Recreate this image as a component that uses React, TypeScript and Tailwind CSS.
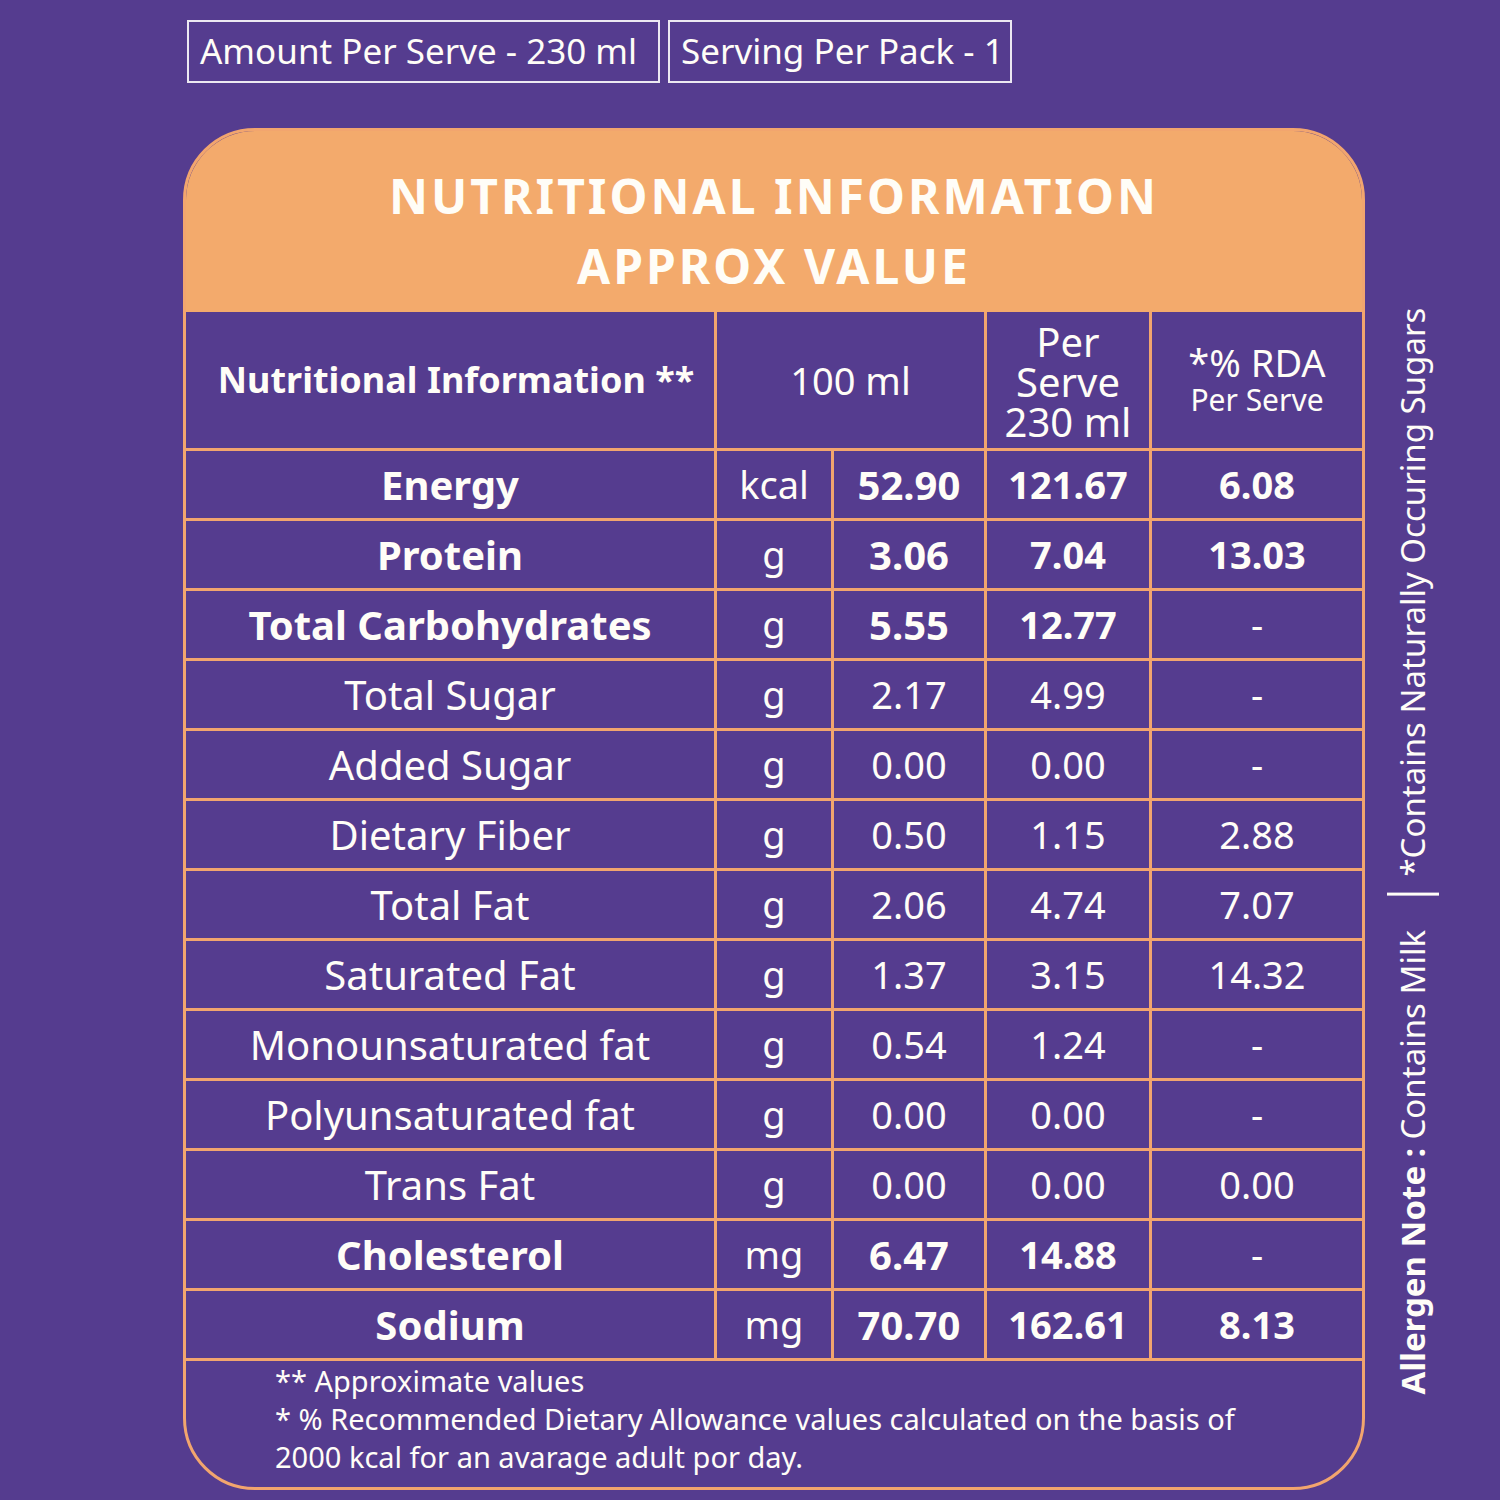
const rows = [
  { name: "Energy", unit: "kcal", per100: "52.90", serve: "121.67", rda: "6.08", bold: true },
  { name: "Protein", unit: "g", per100: "3.06", serve: "7.04", rda: "13.03", bold: true },
  { name: "Total Carbohydrates", unit: "g", per100: "5.55", serve: "12.77", rda: "-", bold: true },
  { name: "Total Sugar", unit: "g", per100: "2.17", serve: "4.99", rda: "-" },
  { name: "Added Sugar", unit: "g", per100: "0.00", serve: "0.00", rda: "-" },
  { name: "Dietary Fiber", unit: "g", per100: "0.50", serve: "1.15", rda: "2.88" },
  { name: "Total Fat", unit: "g", per100: "2.06", serve: "4.74", rda: "7.07" },
  { name: "Saturated Fat", unit: "g", per100: "1.37", serve: "3.15", rda: "14.32" },
  { name: "Monounsaturated fat", unit: "g", per100: "0.54", serve: "1.24", rda: "-" },
  { name: "Polyunsaturated fat", unit: "g", per100: "0.00", serve: "0.00", rda: "-" },
  { name: "Trans Fat", unit: "g", per100: "0.00", serve: "0.00", rda: "0.00" },
  { name: "Cholesterol", unit: "mg", per100: "6.47", serve: "14.88", rda: "-", bold: true },
  { name: "Sodium", unit: "mg", per100: "70.70", serve: "162.61", rda: "8.13", bold: true },
];

const cell = "bg-[#553c8f] flex items-center justify-center text-center";

export default function App() {
  return (
    <main
      className="w-[1500px] h-[1500px] bg-[#553c8f] flex pl-[183px] pt-[20px] text-[#fffdf7]"
      style={{ fontFamily: '"Noto Sans", "Open Sans", sans-serif' }}
    >
      <div className="w-[1182px] flex flex-col">
        {/* serve info boxes */}
        <div className="flex gap-[8px] ml-[4px] h-[63px]">
          <div className="w-[473px] border-2 border-[#ece8f2] flex items-center pl-[11px] text-[35px] whitespace-nowrap">
            Amount Per Serve - 230 ml
          </div>
          <div className="w-[344px] border-2 border-[#ece8f2] flex items-center pl-[11px] text-[35px] whitespace-nowrap">
            Serving Per Pack - 1
          </div>
        </div>

        <div className="mt-[45px] h-[1362px] rounded-[72px] border-[3px] border-[#f2a56e] overflow-hidden flex flex-col">
          {/* title */}
          <div className="h-[181px] bg-[#f3aa6c] flex flex-col items-center justify-center pt-[18px] font-bold text-[48px] leading-[70px] tracking-[3px]">
            <div>NUTRITIONAL INFORMATION</div>
            <div>APPROX VALUE</div>
          </div>

          {/* table */}
          <div className="grid grid-cols-[528px_114px_150px_162px_210px] grid-rows-[136px_repeat(13,67px)] gap-[3px] bg-[#f2a56e] border-b-[3px] border-[#f2a56e]">
            <div className={`${cell} font-bold text-[36px] pl-[12px] whitespace-nowrap`}>Nutritional Information **</div>
            <div className={`${cell} col-span-2 text-[38px]`}>100 ml</div>
            <div className={`${cell} flex-col text-[40px] leading-[40px] pt-[4px]`}>
              <span>Per</span>
              <span>Serve</span>
              <span>230 ml</span>
            </div>
            <div className={`${cell} flex-col pb-[2px]`}>
              <span className="text-[38px] leading-[42px]">*% RDA</span>
              <span className="text-[30px] leading-[34px]">Per Serve</span>
            </div>

            {rows.map((r) => (
              <div key={r.name} className="contents">
                <div className={`${cell} text-[40px] ${r.bold ? "font-bold" : ""}`}>{r.name}</div>
                <div className={`${cell} text-[38px]`}>{r.unit}</div>
                <div className={`${cell} ${r.bold ? "font-bold text-[40px]" : "text-[38px]"}`}>{r.per100}</div>
                <div className={`${cell} ${r.bold ? "font-bold text-[38px]" : "text-[38px]"}`}>{r.serve}</div>
                <div className={`${cell} ${r.bold && r.rda !== "-" ? "font-bold text-[38px]" : "text-[38px]"}`}>{r.rda}</div>
              </div>
            ))}
          </div>

          {/* footnotes */}
          <div className="flex-1 pl-[89px] pt-[1px] text-[29px] leading-[38px]">
            <p>** Approximate values</p>
            <p>* % Recommended Dietary Allowance values calculated on the basis of</p>
            <p>2000 kcal for an avarage adult por day.</p>
          </div>
        </div>
      </div>

      {/* side note */}
      <div className="w-[80px] flex flex-col justify-end pb-[105px] pl-[16px]">
        <div className="[writing-mode:vertical-rl] rotate-180 text-[33px] leading-[46px] whitespace-nowrap flex items-center">
          <span>
            <span className="font-bold">Allergen Note : </span>Contains Milk
          </span>
          <span className="inline-block w-[52px] h-[3px] bg-[#fffdf7] mt-[34px] mb-[16px]" />
          <span>*Contains Naturally Occuring Sugars</span>
        </div>
      </div>
    </main>
  );
}
